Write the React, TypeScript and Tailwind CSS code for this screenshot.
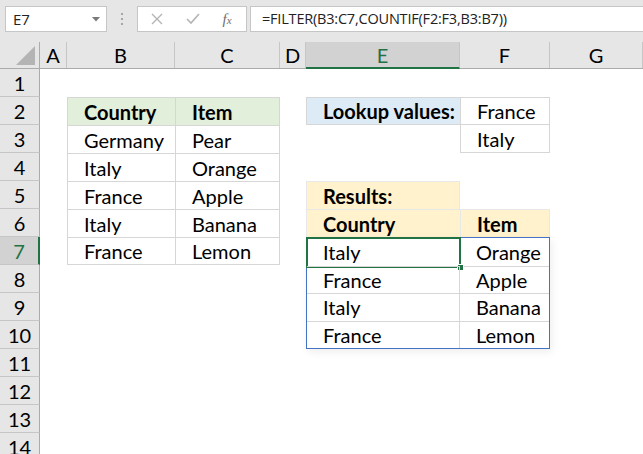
import React from 'react';

const cols = [
  { id: 'A', w: 'w-[27px]' },
  { id: 'B', w: 'w-[108px]' },
  { id: 'C', w: 'w-[105px]' },
  { id: 'D', w: 'w-[26px]' },
  { id: 'E', w: 'w-[154px]' },
  { id: 'F', w: 'w-[90px]' },
  { id: 'G', w: 'flex-1' },
];

const rows = [1, 2, 3, 4, 5, 6, 7, 8, 9, 10, 11, 12, 13, 14];

const data = [
  ['Germany', 'Pear'],
  ['Italy', 'Orange'],
  ['France', 'Apple'],
  ['Italy', 'Banana'],
  ['France', 'Lemon'],
];

const results = [
  ['Italy', 'Orange'],
  ['France', 'Apple'],
  ['Italy', 'Banana'],
  ['France', 'Lemon'],
];

function Cell({ children, className = '' }: { children?: React.ReactNode; className?: string }) {
  return (
    <div className={`flex items-center pl-[16px] text-[20px] leading-none text-black whitespace-nowrap ${className}`}>
      {children}
    </div>
  );
}

function FormulaBar() {
  return (
    <div className="h-[42px] bg-[#e6e6e6] flex items-start pt-[6px] pl-[5px]">
      {/* name box */}
      <div className="w-[102px] h-[26px] bg-white border border-[#c6c6c6] flex items-center justify-between pl-[7px] pr-[6px]">
        <span className="text-[15px] text-[#222] font-['Open_Sans',sans-serif]">E7</span>
        <svg width="8" height="5" viewBox="0 0 8 5">
          <path d="M0 0 L8 0 L4 4.5 Z" fill="#7a7a7a" />
        </svg>
      </div>
      <div className="w-[30px] h-[26px] flex flex-col items-center justify-center gap-[3px]">
        <span className="w-[2px] h-[2px] bg-[#a6a6a6]" />
        <span className="w-[2px] h-[2px] bg-[#a6a6a6]" />
        <span className="w-[2px] h-[2px] bg-[#a6a6a6]" />
      </div>
      {/* cancel / enter / fx */}
      <div className="w-[110px] h-[26px] bg-white border border-[#c6c6c6] flex items-center">
        <div className="w-[38px] flex justify-center">
          <svg width="12" height="12" viewBox="0 0 12 12">
            <path d="M1 1 L11 11 M11 1 L1 11" stroke="#b4b4b4" strokeWidth="1.4" />
          </svg>
        </div>
        <div className="w-[34px] flex justify-center">
          <svg width="14" height="12" viewBox="0 0 14 12">
            <path d="M1 6 L5 10 L13 1" stroke="#b4b4b4" strokeWidth="1.6" fill="none" />
          </svg>
        </div>
        <div className="w-[34px] flex justify-center">
          <span className="text-[15px] italic text-[#6f6f6f] font-['Liberation_Serif',serif]">
            f<span className="text-[11px]">x</span>
          </span>
        </div>
      </div>
      <div className="ml-[3px] flex-1 h-[26px] bg-white border border-[#c6c6c6] border-r-0 flex items-center pl-[11px]">
        <span className="text-[14.5px] text-[#222] font-['Open_Sans',sans-serif] tracking-[-0.2px]">
          =FILTER(B3:C7,COUNTIF(F2:F3,B3:B7))
        </span>
      </div>
    </div>
  );
}

function ColumnHeaders() {
  return (
    <div className="h-[27px] flex bg-[#e6e6e6] border-b border-[#ababab]">
      <div className="w-[40px] border-r border-[#ababab] flex items-end justify-end pr-[4px] pb-[3px]">
        <svg width="19" height="19" viewBox="0 0 19 19">
          <path d="M19 0 L19 19 L0 19 Z" fill="#b4b4b4" />
        </svg>
      </div>
      {cols.map((c) =>
        c.id === 'E' ? (
          <div
            key={c.id}
            className={`${c.w} h-[27px] bg-[#d2d2d2] border-r border-[#c6c6c6] border-b-2 border-b-[#217346] flex items-center justify-center text-[20px] text-[#217346]`}
          >
            {c.id}
          </div>
        ) : (
          <div
            key={c.id}
            className={`${c.w} border-r border-[#c6c6c6] flex items-center justify-center text-[20px] text-black`}
          >
            {c.id}
          </div>
        )
      )}
    </div>
  );
}

function RowHeaders() {
  return (
    <div className="w-[40px] flex flex-col bg-[#e6e6e6]">
      {rows.map((r) =>
        r === 7 ? (
          <div
            key={r}
            className="h-[28px] shrink-0 bg-[#d2d2d2] border-b border-[#c6c6c6] border-r-2 border-r-[#217346] flex items-center justify-center text-[20px] text-[#217346]"
          >
            {r}
          </div>
        ) : (
          <div
            key={r}
            className="h-[28px] shrink-0 border-b border-[#c6c6c6] border-r border-r-[#ababab] flex items-center justify-center text-[20px] text-black"
          >
            {r}
          </div>
        )
      )}
    </div>
  );
}

function Sheet() {
  return (
    <div className="flex-1 bg-white grid grid-cols-[27px_108px_105px_26px_154px_90px_1fr] grid-rows-[repeat(14,28px)]">
      {/* source table B2:C7 */}
      <div className="col-start-2 col-span-2 row-start-2 row-span-6 grid grid-cols-[108px_105px] grid-rows-[repeat(6,28px)]">
        <Cell className="font-bold bg-[#e2efda] border-l border-t border-[#d6d6d6]">Country</Cell>
        <Cell className="font-bold bg-[#e2efda] border-l border-t border-r border-[#d6d6d6]">Item</Cell>
        {data.map(([country, item], i) => (
          <React.Fragment key={i}>
            <Cell className={`border-l border-t border-[#d6d6d6] ${i === data.length - 1 ? 'border-b' : ''}`}>{country}</Cell>
            <Cell className={`border-l border-t border-r border-[#d6d6d6] ${i === data.length - 1 ? 'border-b' : ''}`}>{item}</Cell>
          </React.Fragment>
        ))}
      </div>

      {/* lookup values */}
      <Cell className="col-start-5 row-start-2 font-bold bg-[#ddebf7] border-l border-t border-b border-[#d6d6d6]">
        Lookup values:
      </Cell>
      <div className="col-start-6 row-start-2 row-span-2 grid grid-rows-[repeat(2,28px)]">
        <Cell className="border border-[#d6d6d6]">France</Cell>
        <Cell className="border-l border-r border-b border-[#d6d6d6]">Italy</Cell>
      </div>

      {/* results header */}
      <Cell className="col-start-5 row-start-5 font-bold bg-[#fff2cc] border-l border-t border-r border-[#e8e8e8]">
        Results:
      </Cell>
      <div className="col-start-5 col-span-2 row-start-6 grid grid-cols-[154px_90px]">
        <Cell className="font-bold bg-[#fff2cc] border-l border-t border-[#e8e8e8]">Country</Cell>
        <Cell className="font-bold bg-[#fff2cc] border-l border-t border-r border-[#e8e8e8]">Item</Cell>
      </div>

      {/* spill range E7:F10 */}
      <div className="col-start-5 col-span-2 row-start-7 row-span-4 relative border border-[#4472c4] shadow-[2px_3px_8px_rgba(0,0,0,0.07)] grid grid-cols-[153px_1fr] grid-rows-[repeat(4,1fr)]">
        {results.map(([country, item], i) => (
          <React.Fragment key={i}>
            <Cell className={`relative border-r border-[#d6d6d6] ${i > 0 ? 'border-t' : ''}`}>
              {country}
              {i === 0 && (
                <div className="absolute left-[-1px] top-[-1px] right-[-2px] bottom-[-2px] border-2 border-[#217346]">
                  <div className="absolute right-[-5px] bottom-[-5px] w-[7px] h-[7px] bg-[#217346] border border-white" />
                </div>
              )}
            </Cell>
            <Cell className={`border-[#d6d6d6] ${i > 0 ? 'border-t' : ''}`}>{item}</Cell>
          </React.Fragment>
        ))}
      </div>
    </div>
  );
}

export default function App() {
  return (
    <div className="w-[643px] h-[454px] overflow-hidden bg-white font-['Lato','Liberation_Sans',sans-serif] flex flex-col">
      <FormulaBar />
      <ColumnHeaders />
      <div className="flex flex-1 overflow-hidden">
        <RowHeaders />
        <Sheet />
      </div>
    </div>
  );
}
